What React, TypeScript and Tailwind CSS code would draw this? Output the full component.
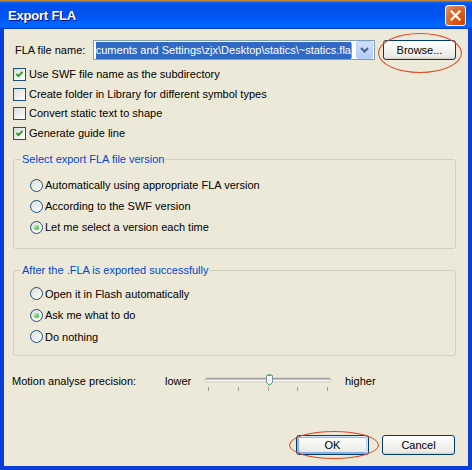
import React from 'react';

function CheckBox({ checked }: { checked?: boolean }) {
  return (
    <span className="w-[13px] h-[13px] shrink-0 border border-[#1c5180] bg-[linear-gradient(135deg,#dcdcd7,#ffffff)] flex items-center justify-center">
      {checked && (
        <svg width="9" height="9" viewBox="0 0 9 9">
          <path d="M1.5 4 L3.5 6.2 L7.5 1.8" stroke="#21a121" strokeWidth="1.9" fill="none" />
        </svg>
      )}
    </span>
  );
}

function Radio({ checked }: { checked?: boolean }) {
  return (
    <span className="w-[13px] h-[13px] shrink-0 rounded-full border border-[#1c5180] bg-[linear-gradient(135deg,#dcdcd7,#ffffff)] flex items-center justify-center">
      {checked && (
        <span className="w-[5px] h-[5px] rounded-full bg-[radial-gradient(circle_at_35%_35%,#a8f0a8,#21a121)]" />
      )}
    </span>
  );
}

function XpButton({ label, primary }: { label: string; primary?: boolean }) {
  return (
    <button
      className={
        primary
          ? 'h-[20px] w-[73px] rounded-[3px] border border-[#003c74] bg-[linear-gradient(180deg,#ffffff,#ecebe6_86%,#d6d0c5)] text-[11px] text-black shadow-[inset_-1px_1px_#cee7ff,inset_1px_2px_#98b8ea,inset_-2px_2px_#bcd4f6,inset_1px_-1px_#89ade4,inset_2px_-2px_#89ade4]'
          : 'h-[20px] w-[73px] rounded-[3px] border border-[#003c74] bg-[linear-gradient(180deg,#ffffff,#ecebe6_86%,#d6d0c5)] text-[11px] text-black'
      }
    >
      {label}
    </button>
  );
}

function Ellipse({ className }: { className: string }) {
  return <span className={'absolute rounded-[50%] border border-[#e2461e] pointer-events-none ' + className} />;
}

const checks = [
  { label: 'Use SWF file name as the subdirectory', checked: true, mt: 'mt-[8px]' },
  { label: 'Create folder in Library for different symbol types', checked: false, mt: 'mt-[7px]' },
  { label: 'Convert static text to shape', checked: false, mt: 'mt-[6px]' },
  { label: 'Generate guide line', checked: true, mt: 'mt-[7px]' },
];

function Slider() {
  const ticks = [5, 35, 65, 94, 124];
  return (
    <svg width="130" height="20" viewBox="0 0 130 20" className="overflow-visible shrink-0">
      <rect x="2" y="7" width="126" height="4" rx="1.5" fill="#f4f4f0" stroke="#b8b8b0" strokeWidth="0.6" />
      <line x1="3" y1="7.8" x2="127" y2="7.8" stroke="#9d9c99" strokeWidth="1.4" />
      {ticks.map((t) => (
        <line key={t} x1={t + 0.5} y1="16" x2={t + 0.5} y2="20" stroke="#a1a192" strokeWidth="1" />
      ))}
      <path
        d="M63.5 5 Q63.5 4 64.5 4 H68.5 Q69.5 4 69.5 5 V11.5 L66.5 14.5 L63.5 11.5 Z"
        fill="#f7f7f4"
        stroke="#7a8ca3"
        strokeWidth="1"
      />
      <line x1="64.5" y1="4.3" x2="68.5" y2="4.3" stroke="#21c121" strokeWidth="1.2" />
      <path d="M64.3 12 L66.5 14 L68.7 12" stroke="#3cc33c" strokeWidth="0.9" fill="none" />
    </svg>
  );
}

export default function App() {
  return (
    <div className="w-[472px] h-[470px] flex flex-col bg-[#0a3cd6] font-['Tahoma','Liberation_Sans',sans-serif] text-[11px] text-black overflow-hidden">
      {/* title bar */}
      <div className="h-[29px] shrink-0 flex items-center justify-between pl-[8px] pr-[6px] border-t border-[#c8843a] bg-[linear-gradient(180deg,#0997ff_0%,#0053ee_8%,#0050ee_40%,#0066ff_88%,#0066ff_93%,#005bff_95%,#003dd7_96%,#003dd7_100%)]">
        <span className="text-white font-bold text-[13px] tracking-[-0.2px] [text-shadow:1px_1px_#0f1089] pt-px">
          Export FLA
        </span>
        <span className="w-[21px] h-[21px] rounded-[3px] border border-white bg-[radial-gradient(circle_at_90%_90%,#cc4600_0%,#dc6527_55%,#cd7546_70%,#ee9a6a_100%)] flex items-center justify-center">
          <svg width="11" height="11" viewBox="0 0 11 11">
            <path d="M1.5 1.5 L9.5 9.5 M9.5 1.5 L1.5 9.5" stroke="white" strokeWidth="2.2" strokeLinecap="square" />
          </svg>
        </span>
      </div>

      {/* body */}
      <div className="flex-1 mx-[4px] mb-[4px] bg-[#ece9d8] flex flex-col">
        {/* file name row */}
        <div className="mt-[11px] h-[20px] flex items-center">
          <span className="w-[89px] pl-[11px] shrink-0">FLA file name:</span>
          <div className="w-[282px] h-[20px] border border-[#7f9db9] bg-white flex items-center">
            <div className="flex-1 h-full overflow-hidden flex justify-end items-center pr-[4px]">
              <span className="h-[17px] leading-[17px] bg-[#316ac5] text-white whitespace-nowrap">
                cuments and Settings\zjx\Desktop\statics\~statics.fla
              </span>
              <span className="w-px h-[15px] bg-[#d69a3a] shrink-0" />
            </div>
            <div className="w-[17px] h-[18px] mr-px rounded-[2px] border border-[#b9d1fa] bg-[linear-gradient(180deg,#d3e0fd,#b6cbf8)] flex items-center justify-center shrink-0">
              <svg width="9" height="6" viewBox="0 0 9 6">
                <path d="M1 1 L4.5 4.5 L8 1" stroke="#4d6185" strokeWidth="2" fill="none" />
              </svg>
            </div>
          </div>
          <div className="relative ml-[8px]">
            <XpButton label="Browse..." />
            <Ellipse className="-left-[5px] -top-[7px] w-[84px] h-[40px]" />
          </div>
        </div>

        {/* checkboxes */}
        <div className="flex flex-col pl-[9px]">
          {checks.map((c) => (
            <div key={c.label} className={'h-[13px] flex items-center gap-[3px] ' + c.mt}>
              <CheckBox checked={c.checked} />
              <span className="whitespace-nowrap">{c.label}</span>
            </div>
          ))}
        </div>

        {/* group 1 */}
        <div className="mt-[19px] ml-[9px] w-[443px] h-[90px] rounded-[3px] border border-[#d0d0bf] flex flex-col">
          <span className="-mt-[8px] ml-[7px] px-[1px] self-start h-[14px] leading-[14px] bg-[#ece9d8] text-[#0046d5]">
            Select export FLA file version
          </span>
          <div className="mt-[9px] flex flex-col pl-[16px]">
            {[
              ['Automatically using appropriate FLA version', false],
              ['According to the SWF version', false],
              ['Let me select a version each time', true],
            ].map(([label, on]) => (
              <div key={label as string} className="h-[21px] flex items-center gap-[2px]">
                <Radio checked={on as boolean} />
                <span>{label}</span>
              </div>
            ))}
          </div>
        </div>

        {/* group 2 */}
        <div className="mt-[21px] ml-[9px] w-[443px] h-[86px] rounded-[3px] border border-[#d0d0bf] flex flex-col">
          <span className="-mt-[8px] ml-[7px] px-[1px] self-start h-[14px] leading-[14px] bg-[#ece9d8] text-[#0046d5]">
            After the .FLA is exported successfully
          </span>
          <div className="mt-[6px] flex flex-col pl-[16px]">
            {[
              ['Open it in Flash automatically', false],
              ['Ask me what to do', true],
              ['Do nothing', false],
            ].map(([label, on]) => (
              <div key={label as string} className="h-[21.5px] flex items-center gap-[2px]">
                <Radio checked={on as boolean} />
                <span>{label}</span>
              </div>
            ))}
          </div>
        </div>

        {/* motion precision */}
        <div className="mt-[15px] h-[20px] flex items-center">
          <span className="w-[161px] pl-[8px] shrink-0">Motion analyse precision:</span>
          <span className="w-[38px] shrink-0">lower</span>
          <Slider />
          <span className="ml-[12px]">higher</span>
        </div>

        {/* buttons */}
        <div className="mt-auto mb-[11px] flex justify-end gap-[13px] pr-[13px]">
          <div className="relative">
            <XpButton label="OK" primary />
            <Ellipse className="-left-[7px] -top-[4px] w-[90px] h-[28px]" />
          </div>
          <XpButton label="Cancel" />
        </div>
      </div>
    </div>
  );
}
